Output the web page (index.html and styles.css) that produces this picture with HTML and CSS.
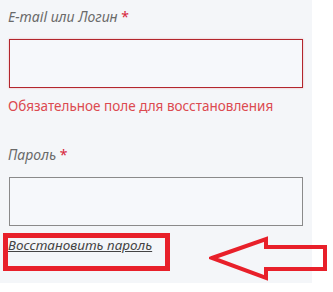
FILE: index.html
```html
<!DOCTYPE html>
<html lang="ru">
<head>
    <meta charset="UTF-8">
    <meta name="viewport" content="width=device-width, initial-scale=1.0">
    <title>Восстановление пароля</title>
    <link rel="stylesheet" href="styles.css">
</head>
<body>
    <div class="form">
        <div class="field">
            <label class="label" for="login">E-mail или Логин <span class="req">*</span></label>
            <input class="input input-error" type="text" id="login">
            <div class="error">Обязательное поле для восстановления</div>
        </div>
        <div class="field">
            <label class="label" for="pass">Пароль <span class="req">*</span></label>
            <input class="input" type="password" id="pass">
        </div>
        <a class="restore" href="#">Восстановить пароль</a>
    </div>

    <!-- annotation over the screenshot -->
    <div class="mark-box"></div>
    <svg class="mark-arrow" width="122" height="46" viewBox="0 0 122 46">
        <polygon points="3,22 57,3 57,11 116,11 116,33 57,33 57,42" fill="none" stroke="#e8202a" stroke-width="4" stroke-linejoin="miter"/>
    </svg>
</body>
</html>
```

FILE: styles.css
```css
body {
    margin: 0;
    padding: 0;
    background-color: #fff;
    font-family: "Noto Sans", sans-serif;
}

.form {
    width: 312px;
    height: 283px;
    padding-left: 9px;
    padding-top: 7px;
    background-color: #f4f6f9;
    box-sizing: border-box;
}

.label {
    display: block;
    font-style: italic;
    font-size: 14px;
    color: #6a6a6a;
    height: 19px;
    line-height: 19px;
    margin-left: -1px;
}

.req {
    color: #d7263d;
    font-style: normal;
}

.input {
    display: block;
    box-sizing: border-box;
    width: 294px;
    height: 49px;
    margin-top: 13px;
    border: 1px solid #8a8a8a;
    background-color: #f6f8fb;
    outline: none;
}

.input-error {
    border-color: #b3262d;
    box-shadow: 0 0 2px rgba(220, 60, 70, 0.35);
}

.error {
    margin-top: 9px;
    margin-left: -1px;
    font-size: 13.5px;
    color: #dc4a50;
    line-height: 19px;
}

.field + .field {
    margin-top: 29px;
}

.restore {
    display: inline-block;
    margin-top: 10px;
    margin-left: -1px;
    font-style: italic;
    font-size: 13.5px;
    color: #444;
    line-height: 18px;
}

.mark-box {
    position: absolute;
    left: 3px;
    top: 233px;
    width: 167px;
    height: 38px;
    box-sizing: border-box;
    border: 5px solid #e8202a;
}

.mark-arrow {
    position: absolute;
    left: 209px;
    top: 236px;
}
```
